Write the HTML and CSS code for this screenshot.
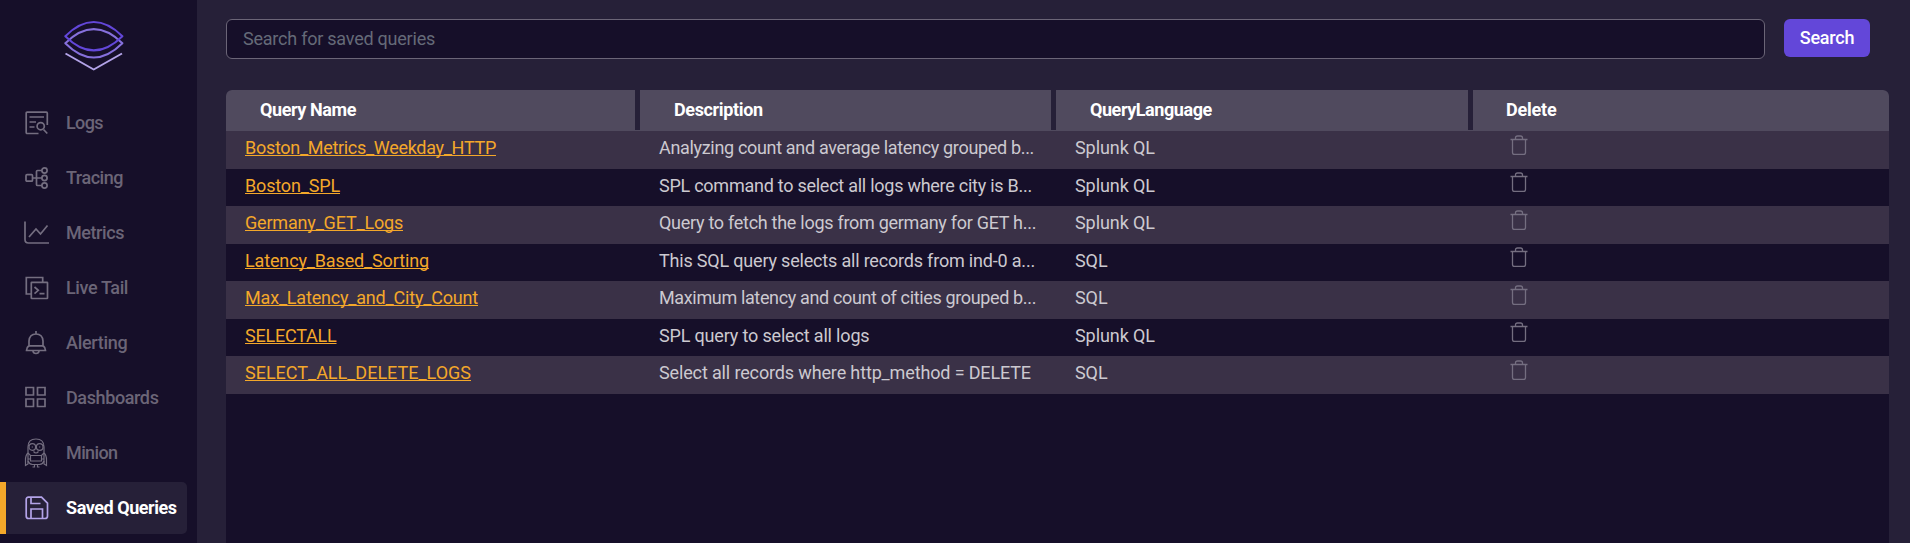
FILE: index.html
```html
<!DOCTYPE html>
<html lang="en">
<head>
<meta charset="utf-8">
<title>Saved Queries</title>
<link rel="stylesheet" href="styles.css">
</head>
<body>
<svg class="defs" width="0" height="0"><defs>
  <symbol id="trash" viewBox="0 0 18 20"><path d="M.5 4.500H17.500M2.500 4.500V17.500Q2.500 19.500 4.500 19.500H13.500Q15.500 19.500 15.500 17.500V4.500M5.500 4.500V3Q5.500 1 7.500 1H10.500Q12.500 1 12.500 3V4.500"/></symbol>
</defs></svg>
<div class="app">
  <aside class="sidebar">
    <div class="logo">
      <svg width="60" height="52" viewBox="0 0 60 52" fill="none" stroke-width="2" stroke-linejoin="round">
        <path stroke="#b3a3e8" d="M1.500 33.500 29.700 49.500 58 33.500"/>
        <path stroke="#8670dc" d="M1.300 23.300Q29.700-5 58.400 23.300Q29.700 51.800 1.300 23.300Z"/>
        <path stroke="#6347d9" d="M1.300 16.200Q29.700-12.200 58.400 16.200Q29.700 44.600 1.300 16.200Z"/>
      </svg>
    </div>
    <nav class="menu">
      <a class="item"><svg class="icon" viewBox="0 0 24 24"><path d="M13.500 22.500H2.200Q1.200 22.500 1.200 21.500V2.200Q1.200 1.200 2.200 1.200H21.300Q22.300 1.200 22.300 2.200V14"/><path d="M4.500 6H19M4.500 11H11M4.500 16H9.500M18.500 18.500 22.300 22.500"/><circle cx="15.700" cy="15.200" r="3.600"/></svg><span class="t-logs">Logs</span></a>
      <a class="item"><svg class="icon" viewBox="0 0 24 24"><rect x="1" y="8.700" width="6.500" height="6.500" rx="1"/><path d="M7.500 12H17M17 4.500H12.500Q11.500 4.500 11.500 5.500V18.500Q11.500 19.500 12.500 19.500H17"/><circle cx="19.500" cy="4.500" r="2.600"/><circle cx="19.500" cy="12" r="2.600"/><circle cx="19.500" cy="19.500" r="2.600"/></svg><span class="t-tracing">Tracing</span></a>
      <a class="item"><svg class="icon" viewBox="0 0 24 24"><path d="M0 .5V18.500Q0 22 3.500 22H24"/><path d="M4 16 11 8 15.500 13 22.500 4.500"/></svg><span class="t-metrics">Metrics</span></a>
      <a class="item"><svg class="icon" viewBox="0 0 24 24"><path d="M6 18H1.300V1.500H17.700V6.300"/><rect x="6.300" y="6.300" width="16.200" height="16.200" rx=".5"/><path d="M9.500 11 13.300 14.300 9.500 17.600M14.500 17.600H19.500"/></svg><span class="t-livetail">Live Tail</span></a>
      <a class="item"><svg class="icon" viewBox="0 0 24 24"><path d="M11 0V3M4 14.500V10Q4.500 3 11 3T18 10V14.500Q20.500 16.500 20.500 19.500H1.500Q1.500 16.500 4 14.500Z"/><path d="M8 20Q8.300 22.500 11 22.500T14 20M4 14.800H18"/></svg><span class="t-alerting">Alerting</span></a>
      <a class="item"><svg class="icon" viewBox="0 0 24 24"><path d="M1 1.500H8.500V9H1ZM12.500 1.500H20V9H12.500ZM1 13H8.500V20.500H1ZM12.500 13H20V20.500H12.500Z"/></svg><span class="t-dashboards">Dashboards</span></a>
      <a class="item"><svg class="icon thin" viewBox="0 0 24 32"><path d="M3 18V10Q3 2 11 2T19 10V24Q18 27 14.500 27.500H7.500Q4 27 3 24V18"/><circle cx="7.300" cy="10" r="3.300"/><circle cx="14.700" cy="10" r="3.300"/><path d="M7.300 9.600V10.600M14.700 9.600V10.600M3 8.500H4M18 8.500H19M8.500 14.500Q11 17.500 13.500 14.500M3 16 5.500 18.500H16.500L19 16M5.500 18.500V24H16.500V18.500M3 22H5.500M16.500 22H19M3 16Q.5 18 .5 23V28.500L3 27V24M19 16Q21.500 18 21.500 23V28.500L19 27V24M9.500 27.500V30H7.500M12.500 27.500V30H14.500"/></svg><span class="t-minion">Minion</span></a>
      <a class="item active"><svg class="icon" viewBox="0 0 24 24"><path d="M3.500 1.200H16.500L22.500 7.200V20Q22.500 22.500 20 22.500H3.500Q1.200 22.500 1.200 20V3.500Q1.200 1.200 3.500 1.200Z"/><path d="M6 1.200V7.500H15.500M6 22.500V13H17.500V22.500"/></svg><span class="t-saved">Saved Queries</span></a>
    </nav>
  </aside>
  <main class="content">
    <div class="searchbar">
      <input class="search-input" type="text" placeholder="Search for saved queries">
      <button class="search-btn">Search</button>
    </div>
    <section class="grid">
      <div class="head">
        <div class="h-name">Query Name</div><div class="h-desc">Description</div><div class="h-lang">QueryLanguage</div><div class="h-del">Delete</div>
      </div>
      <div class="row"><a class="q1">Boston_Metrics_Weekday_HTTP</a><span class="d1">Analyzing count and average latency grouped b...</span><span>Splunk QL</span><svg class="trash"><use href="#trash"/></svg></div>
      <div class="row"><a class="q2">Boston_SPL</a><span class="d2">SPL command to select all logs where city is B...</span><span>Splunk QL</span><svg class="trash"><use href="#trash"/></svg></div>
      <div class="row"><a class="q3">Germany_GET_Logs</a><span class="d3">Query to fetch the logs from germany for GET h...</span><span>Splunk QL</span><svg class="trash"><use href="#trash"/></svg></div>
      <div class="row"><a class="q4">Latency_Based_Sorting</a><span class="d4">This SQL query selects all records from ind-0 a...</span><span>SQL</span><svg class="trash"><use href="#trash"/></svg></div>
      <div class="row"><a class="q5">Max_Latency_and_City_Count</a><span class="d5">Maximum latency and count of cities grouped b...</span><span>SQL</span><svg class="trash"><use href="#trash"/></svg></div>
      <div class="row"><a class="q6">SELECTALL</a><span class="d6">SPL query to select all logs</span><span>Splunk QL</span><svg class="trash"><use href="#trash"/></svg></div>
      <div class="row"><a class="q7">SELECT_ALL_DELETE_LOGS</a><span class="d7">Select all records where http_method = DELETE</span><span>SQL</span><svg class="trash"><use href="#trash"/></svg></div>
    </section>
  </main>
</div>
</body>
</html>
```
FILE: styles.css
```css
* { box-sizing: border-box; }
body { margin: 0; font: 18px/24px Roboto, sans-serif; background: #262038; color: #ccc9d0; }
.defs { display: block; }
.app { display: flex; height: 543px; overflow: hidden; }

/* Sidebar */
.sidebar { width: 197px; flex: none; background: #160f29; }
.logo { height: 97px; padding: 20px 0 0 64px; }
.menu { display: flex; flex-direction: column; gap: 3px; }
.item { display: flex; align-items: center; height: 52px; width: 187px; padding-left: 25px; color: #6b6577; font-weight: 500; white-space: nowrap; }
.icon { flex: none; width: 24px; height: 24px; margin-right: 17px; fill: none; stroke: #746e80; stroke-width: 1.7; overflow: visible; }
.thin { height: 32px; stroke-width: 1.2; }
.active { border-left: 6px solid #f4a82a; padding-left: 19px; border-radius: 0 5px 5px 0; background: #262038; color: #fff; font-weight: 700; }
.active .icon { stroke: #b3a3e8; }
.t-logs { letter-spacing: -.6px; }
.t-tracing { letter-spacing: -.47px; }
.t-metrics { letter-spacing: -.43px; }
.t-livetail { letter-spacing: -.38px; }
.t-alerting { letter-spacing: -.284px; }
.t-dashboards { letter-spacing: -.385px; }
.t-minion { letter-spacing: -.61px; }
.t-saved { letter-spacing: -.45px; }

/* Search */
.content { flex: 1; padding: 19px 21px 0 29px; }
.searchbar { display: flex; gap: 19px; align-items: flex-start; }
.search-input { width: 1539px; height: 40px; padding: 0 15px 2px 16px; border: 1px solid #6b6577; border-radius: 6px; background: #160f29; color: #fff; font: 18px Roboto, sans-serif; letter-spacing: -.232px; }
.search-input::placeholder { color: #656a78; }
.search-btn { width: 86px; height: 38px; padding: 0 0 2px; border: 0; border-radius: 6px; background: #6347d9; color: #fff; font: 500 18px Roboto, sans-serif; letter-spacing: -.22px; }

/* Grid */
.grid { margin-top: 31px; height: 453px; border-radius: 6px 6px 0 0; overflow: hidden; background: #160f29; }
.head { display: grid; grid-template-columns: 409px 411px 412px 1fr; gap: 5px; height: 41px; border-bottom: 1px solid #504a5e; background: #262038; line-height: 40px; font-weight: 700; color: #fff; }
.head > div { height: 40px; padding-left: 34px; background: #504a5e; }
.h-name { letter-spacing: -.42px; }
.h-desc { letter-spacing: -.36px; }
.h-lang { letter-spacing: -.44px; }
.head > .h-del { padding-left: 33px; letter-spacing: -.2px; }
.row { display: grid; grid-template-columns: 414px 416px 435px 1fr; align-items: start; justify-items: start; height: 37.5px; padding-left: 19px; line-height: 34px; letter-spacing: -.08px; white-space: nowrap; }
.row:nth-child(even) { background: #3a3147; }
.row a { color: #f4a82a; text-decoration: underline; text-decoration-thickness: 1px; text-underline-offset: 1px; text-decoration-skip-ink: none; }
.trash { width: 18px; height: 20px; margin-top: 3.5px; fill: none; stroke: #746e80; stroke-width: 1.3; }
.q1 { letter-spacing: -.297px; }
.q2 { letter-spacing: -.155px; }
.q3 { letter-spacing: -.184px; }
.q4 { letter-spacing: -.14px; }
.q5 { letter-spacing: -.186px; }
.q6 { letter-spacing: -.22px; }
.q7 { letter-spacing: -.005px; }
.d1 { letter-spacing: -.327px; }
.d2 { letter-spacing: -.255px; }
.d3 { letter-spacing: -.28px; }
.d4 { letter-spacing: -.191px; }
.d5 { letter-spacing: -.357px; }
.d6 { letter-spacing: -.167px; }
.d7 { letter-spacing: -.14px; }
```
